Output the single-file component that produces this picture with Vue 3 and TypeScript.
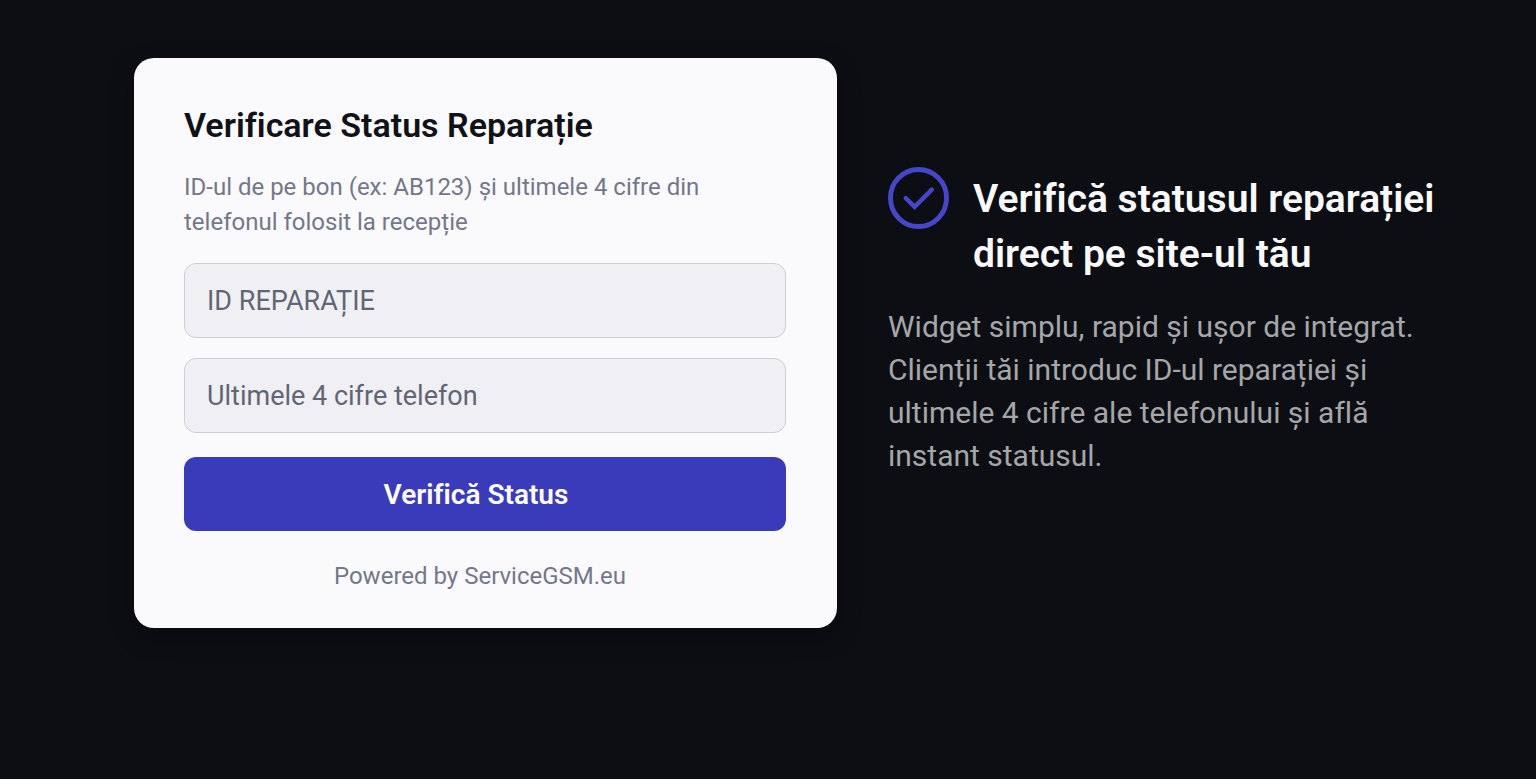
<script setup lang="ts">
import { ref } from 'vue'

const repairId = ref('')
const phoneDigits = ref('')
</script>

<template>
  <main class="page">
    <form class="card" @submit.prevent>
      <h1 class="card-title">Verificare Status Reparație</h1>
      <p class="card-hint">ID-ul de pe bon (ex: AB123) și ultimele 4 cifre din telefonul folosit la recepție</p>
      <input v-model="repairId" class="field" type="text" aria-label="ID reparație" placeholder="ID REPARAȚIE" />
      <input v-model="phoneDigits" class="field" type="text" inputmode="numeric" maxlength="4" aria-label="Ultimele 4 cifre telefon" placeholder="Ultimele 4 cifre telefon" />
      <button class="submit" type="submit">Verifică Status</button>
      <p class="powered">Powered by ServiceGSM.eu</p>
    </form>
    <section class="pitch">
      <div class="pitch-head">
        <svg class="check" viewBox="0 0 62 63" fill="none" aria-hidden="true">
          <ellipse cx="31" cy="31.5" rx="28.5" ry="29" stroke-width="5" />
          <path d="M18 31.5 27 40.5 44.5 23" stroke-width="4.5" stroke-linecap="round" stroke-linejoin="miter" />
        </svg>
        <h2 class="pitch-title">Verifică statusul reparației direct pe site-ul tău</h2>
      </div>
      <p class="pitch-text">Widget simplu, rapid și ușor de integrat. Clienții tăi introduc ID-ul reparației și ultimele 4 cifre ale telefonului și află instant statusul.</p>
    </section>
  </main>
</template>

<style>
body {
  background: #0c0e13;
}
</style>

<style scoped>
.page {
  box-sizing: border-box;
  min-height: 100vh;
  display: grid;
  grid-template-columns: minmax(0, 703fr) minmax(0, 550fr);
  align-items: start;
  gap: 51px;
  padding: 58px 98px 58px 134px;
  background: #0c0e13;
  font-family: Roboto, "Liberation Sans", sans-serif;
  font-variant-ligatures: none;
}

h1,
h2,
p {
  margin: 0;
}

.card {
  display: flex;
  flex-direction: column;
  padding: 46px 51px 34px 50px;
  border-radius: 20px;
  background: #fafafc;
  box-shadow: 0 8px 24px rgb(0 0 0 / 30%);
}

.card-title {
  margin-bottom: 24px;
  color: #111118;
  font-size: 34px;
  font-weight: 600;
  line-height: 42px;
}

.card-hint {
  margin-bottom: 23px;
  color: #74778a;
  font-size: 24px;
  line-height: 35px;
}

.field {
  box-sizing: border-box;
  width: 100%;
  height: 75px;
  margin: 0 0 20px;
  padding: 0 22px;
  border: 1px solid #cdced8;
  border-radius: 12px;
  outline: none;
  background: #f0f0f4;
  color: #20222c;
  font-family: inherit;
  font-size: 27px;
}

.field::placeholder {
  color: #626575;
  opacity: 1;
}

.submit {
  height: 74px;
  margin: 4px 0 28px;
  padding: 0 18px 0 0;
  border: 0;
  border-radius: 12px;
  background: #3a3bbb;
  color: #fff;
  font-family: inherit;
  font-size: 28px;
  font-variant-ligatures: none;
  font-weight: 600;
}

.powered {
  padding-right: 10px;
  color: #74778a;
  font-size: 24px;
  line-height: 35px;
  text-align: center;
}

.pitch {
  padding-top: 109px;
}

.pitch-head {
  display: flex;
  align-items: flex-start;
  gap: 24px;
  margin-bottom: 23px;
}

.check {
  flex: none;
  width: 61px;
  height: 62px;
  stroke: #4546ca;
}

.pitch-title {
  padding-top: 5px;
  color: #fafafc;
  font-size: 39px;
  font-weight: 600;
  line-height: 55px;
}

.pitch-text {
  color: #a5a6aa;
  font-size: 30px;
  line-height: 43px;
}
</style>
